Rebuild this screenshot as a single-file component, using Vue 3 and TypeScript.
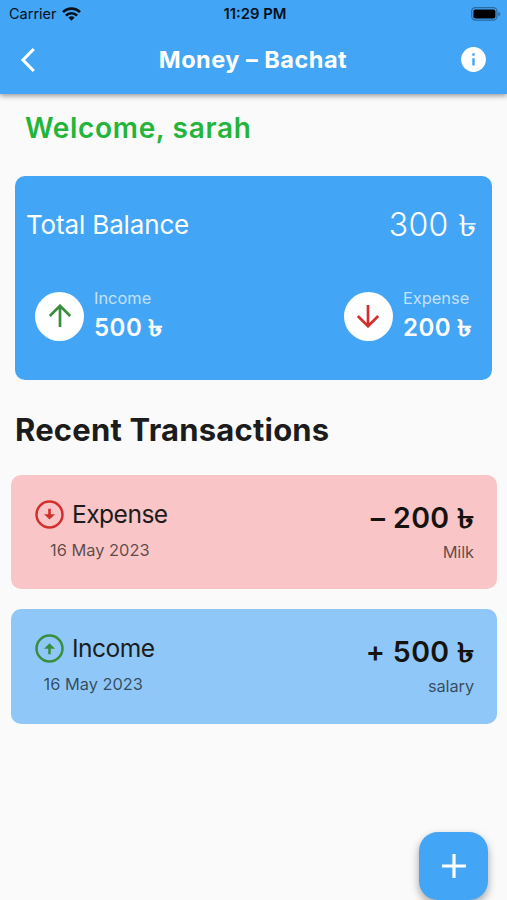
<script setup lang="ts">
interface Transaction {
  id: number
  kind: 'expense' | 'income'
  title: string
  date: string
  sign: string
  amount: number
  note: string
}

const transactions: Transaction[] = [
  { id: 1, kind: 'expense', title: 'Expense', date: '16 May 2023', sign: '–', amount: 200, note: 'Milk' },
  { id: 2, kind: 'income', title: 'Income', date: '16 May 2023', sign: '+', amount: 500, note: 'salary' },
]
</script>

<template>
  <div class="screen">
    <header class="top">
      <div class="status">
        <div class="carrier">
          <span>Carrier</span>
          <svg width="19" height="14" viewBox="0 0 19 14">
            <g fill="none" stroke="#06101a" stroke-width="2.7">
              <path d="M1 5.1a12 12 0 0 1 17 0" />
              <path d="M3.9 8.6a7.8 7.8 0 0 1 11.2 0" />
            </g>
            <path d="M6.4 10.6a4.4 4.4 0 0 1 6.2 0L9.5 13.8z" fill="#06101a" />
          </svg>
        </div>
        <span class="clock">11:29 PM</span>
        <svg class="battery" width="30" height="14" viewBox="0 0 30 14">
          <rect x=".7" y=".7" width="25.2" height="12.4" rx="3.6" fill="none" stroke="#2b6a9e" stroke-width="1.2" />
          <rect x="2.4" y="2.4" width="22" height="9" rx="2" fill="#000" />
          <path d="M27.3 4.8q2 .7 2 2.2t-2 2.2z" fill="#2b6a9e" />
        </svg>
      </div>
      <div class="bar">
        <svg class="back" width="16" height="26" viewBox="0 0 16 26">
          <path d="M13.8 2L3 13l10.8 11" fill="none" stroke="#fff" stroke-width="3.1" />
        </svg>
        <h1>Money – Bachat</h1>
        <svg class="info" width="25" height="25" viewBox="0 0 25 25">
          <circle cx="12.5" cy="12.5" r="12.4" fill="#fff" />
          <path d="M11.3 6.3h2.4v2.4h-2.4zM11.3 11.2h2.4v7.4h-2.4z" fill="#42a5f5" />
        </svg>
      </div>
    </header>

    <main>
      <h2 class="welcome">Welcome, sarah</h2>

      <section class="balance">
        <div class="total">
          <span class="total-label">Total Balance</span>
          <span class="total-value">300 <i class="taka">৳</i></span>
        </div>
        <div class="flows">
          <div class="flow">
            <div class="disc">
              <svg width="24" height="24" viewBox="0 0 24 24">
                <path d="M12 23V2M1.8 12L12 1.8 22.2 12" fill="none" stroke="#388e3c" stroke-width="2.7" />
              </svg>
            </div>
            <div class="figures">
              <span class="flow-label">Income</span>
              <span class="flow-value">500 <i class="taka">৳</i></span>
            </div>
          </div>
          <div class="flow">
            <div class="disc">
              <svg width="24" height="24" viewBox="0 0 24 24">
                <path d="M12 1V22M1.8 12L12 22.2 22.2 12" fill="none" stroke="#d32f2f" stroke-width="2.7" />
              </svg>
            </div>
            <div class="figures">
              <span class="flow-label">Expense</span>
              <span class="flow-value">200 <i class="taka">৳</i></span>
            </div>
          </div>
        </div>
      </section>

      <h2 class="recent">Recent Transactions</h2>

      <ul>
        <li v-for="t in transactions" :key="t.id" :class="t.kind">
          <div class="left">
            <div class="kind">
              <svg width="29" height="29" viewBox="0 0 29 29">
                <circle cx="14.5" cy="14.5" r="13" fill="none" stroke="currentColor" stroke-width="2.5" />
                <path v-if="t.kind === 'expense'" d="M13.2 8.7h2.6v5.5h4.2l-5.5 5.4L9 14.2h4.2z" fill="currentColor" />
                <path v-else d="M13.2 20.3h2.6v-5.5h4.2L14.5 9.3 9 14.8h4.2z" fill="currentColor" />
              </svg>
              <span>{{ t.title }}</span>
            </div>
            <span class="date">{{ t.date }}</span>
          </div>
          <div class="right">
            <span class="amount">{{ t.sign }} {{ t.amount }} <i class="taka">৳</i></span>
            <span class="note">{{ t.note }}</span>
          </div>
        </li>
      </ul>
    </main>

    <button class="add" aria-label="Add">
      <svg width="24" height="24" viewBox="0 0 24 24">
        <path d="M12 0v24M0 12h24" stroke="#fff" stroke-width="3.2" />
      </svg>
    </button>
  </div>
</template>

<style>
body {
  margin: 0;
  overflow: hidden;
}
</style>

<style scoped>
.screen {
  position: relative;
  width: 507px;
  height: 900px;
  overflow: hidden;
  background: #fafafa;
  font-family: Inter, "Noto Sans", sans-serif;
  color: #1c1c1c;
}
svg {
  display: block;
  flex: none;
}
h1,
h2,
ul {
  margin: 0;
  padding: 0;
}
span,
h1,
h2 {
  white-space: nowrap;
}
.top {
  height: 94px;
  background: #42a5f5;
  box-shadow: 0 2px 5px rgba(0, 0, 0, 0.38);
}
.status {
  display: grid;
  grid-template-columns: 1fr auto 1fr;
  align-items: center;
  height: 27px;
  padding: 0 6px 0 9px;
  font-size: 14.5px;
  color: #06101a;
}
.carrier {
  display: flex;
  align-items: center;
  gap: 5px;
}
.clock {
  font-size: 14.8px;
  font-weight: 600;
}
.battery {
  justify-self: end;
}
.bar {
  display: grid;
  grid-template-columns: 1fr auto 1fr;
  align-items: center;
  height: 65px;
  padding: 0 21px 0 20px;
}
.info {
  justify-self: end;
}
h1 {
  font-size: 23.5px;
  font-weight: 650;
  letter-spacing: 0.5px;
  color: #fff;
}
.welcome {
  margin: 15px 0 0 25px;
  font-size: 28px;
  line-height: 38px;
  font-weight: 600;
  letter-spacing: 0.67px;
  color: #23b53a;
}
.balance {
  box-sizing: border-box;
  height: 203.5px;
  margin: 29px 15px 0;
  padding: 28px 15px 0 10px;
  border-radius: 10px;
  background: #42a5f5;
  color: #fff;
}
.total {
  display: flex;
  align-items: center;
  justify-content: space-between;
  height: 40px;
}
.total-label {
  padding-left: 1px;
  font-size: 26px;
  letter-spacing: -0.15px;
}
.total-value {
  padding-top: 1px;
  font-size: 32px;
  font-weight: 350;
  letter-spacing: 0.3px;
}
.flows {
  display: flex;
  justify-content: space-between;
  padding: 45px 5px 0 10px;
}
.flow {
  display: flex;
  gap: 10px;
}
.disc {
  display: grid;
  place-items: center;
  width: 49px;
  height: 49px;
  margin-top: 2.5px;
  border-radius: 50%;
  background: #fff;
}
.figures {
  display: flex;
  flex-direction: column;
}
.flow-label {
  font-size: 16.4px;
  line-height: 19px;
  color: #c3e2fc;
}
.flow-value {
  font-size: 24px;
  line-height: 39px;
  font-weight: 600;
  letter-spacing: 0.5px;
}
.recent {
  margin: 29.5px 0 0 15px;
  font-size: 31px;
  line-height: 42px;
  font-weight: 700;
  letter-spacing: 0.2px;
}
ul {
  display: flex;
  flex-direction: column;
  gap: 20px;
  margin: 24px 10px 0 11px;
  list-style: none;
}
li {
  box-sizing: border-box;
  display: flex;
  justify-content: space-between;
  height: 114.4px;
  padding: 24px 23px 0 24px;
  border-radius: 10px;
}
li.expense {
  background: #f9c5c6;
}
li.income {
  background: #8fc8f8;
}
.expense svg {
  color: #d32f2f;
}
.income svg {
  color: #388e3c;
}
.left {
  display: flex;
  flex-direction: column;
  align-items: center;
}
.kind {
  display: flex;
  align-items: center;
  gap: 8px;
  height: 30px;
  font-size: 24.6px;
  letter-spacing: -0.55px;
}
.date {
  margin: 10px 3px 0 0;
  font-size: 16.4px;
  line-height: 22px;
  color: rgba(0, 0, 0, 0.64);
}
.right {
  display: flex;
  flex-direction: column;
  align-items: flex-end;
}
.amount {
  font-size: 28.5px;
  line-height: 38px;
  font-weight: 600;
  letter-spacing: 0.4px;
  color: #16130f;
}
.note {
  margin-top: 4px;
  font-size: 16.4px;
  line-height: 22px;
  letter-spacing: -0.1px;
  color: rgba(0, 0, 0, 0.64);
}
.taka {
  display: inline-block;
  font-style: normal;
  letter-spacing: 0;
  line-height: 1;
  transform: scale(1.22, 0.94);
  transform-origin: 95% 65%;
  margin-left: 0.1em;
}
.add {
  position: absolute;
  left: 419px;
  top: 832px;
  display: grid;
  place-items: center;
  width: 69px;
  height: 68px;
  padding: 0;
  border: 0;
  border-radius: 19px;
  background: #42a5f5;
  box-shadow: 0 4px 9px rgba(0, 0, 0, 0.35);
}
</style>
